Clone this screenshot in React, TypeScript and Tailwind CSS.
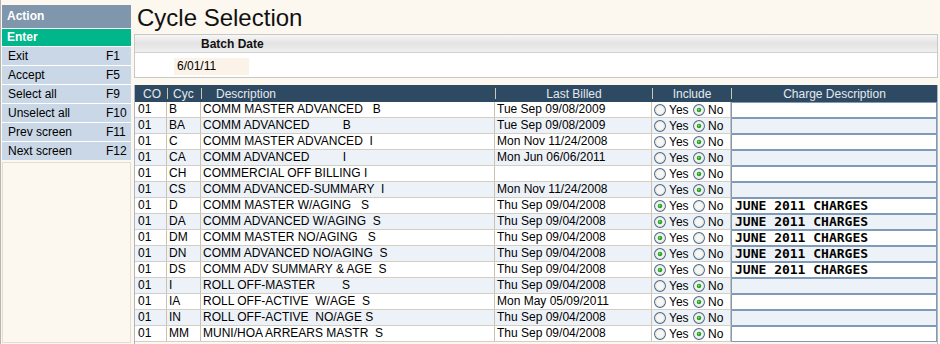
import React from "react";

type Row = {
  co: string;
  cyc: string;
  desc: string;
  billed: string;
  yes: boolean;
  charge: string;
};

const J = "JUNE 2011 CHARGES";

const rows: Row[] = [
  { co: "01", cyc: "B", desc: "COMM MASTER ADVANCED   B", billed: "Tue Sep 09/08/2009", yes: false, charge: "" },
  { co: "01", cyc: "BA", desc: "COMM ADVANCED          B", billed: "Tue Sep 09/08/2009", yes: false, charge: "" },
  { co: "01", cyc: "C", desc: "COMM MASTER ADVANCED  I", billed: "Mon Nov 11/24/2008", yes: false, charge: "" },
  { co: "01", cyc: "CA", desc: "COMM ADVANCED          I", billed: "Mon Jun 06/06/2011", yes: false, charge: "" },
  { co: "01", cyc: "CH", desc: "COMMERCIAL OFF BILLING I", billed: "", yes: false, charge: "" },
  { co: "01", cyc: "CS", desc: "COMM ADVANCED-SUMMARY  I", billed: "Mon Nov 11/24/2008", yes: false, charge: "" },
  { co: "01", cyc: "D", desc: "COMM MASTER W/AGING   S", billed: "Thu Sep 09/04/2008", yes: true, charge: J },
  { co: "01", cyc: "DA", desc: "COMM ADVANCED W/AGING  S", billed: "Thu Sep 09/04/2008", yes: true, charge: J },
  { co: "01", cyc: "DM", desc: "COMM MASTER NO/AGING   S", billed: "Thu Sep 09/04/2008", yes: true, charge: J },
  { co: "01", cyc: "DN", desc: "COMM ADVANCED NO/AGING  S", billed: "Thu Sep 09/04/2008", yes: true, charge: J },
  { co: "01", cyc: "DS", desc: "COMM ADV SUMMARY & AGE  S", billed: "Thu Sep 09/04/2008", yes: true, charge: J },
  { co: "01", cyc: "I", desc: "ROLL OFF-MASTER        S", billed: "Thu Sep 09/04/2008", yes: false, charge: "" },
  { co: "01", cyc: "IA", desc: "ROLL OFF-ACTIVE  W/AGE  S", billed: "Mon May 05/09/2011", yes: false, charge: "" },
  { co: "01", cyc: "IN", desc: "ROLL OFF-ACTIVE  NO/AGE S", billed: "Thu Sep 09/04/2008", yes: false, charge: "" },
  { co: "01", cyc: "MM", desc: "MUNI/HOA ARREARS MASTR  S", billed: "Thu Sep 09/04/2008", yes: false, charge: "" },
];

const menu: [string, string][] = [
  ["Exit", "F1"],
  ["Accept", "F5"],
  ["Select all", "F9"],
  ["Unselect all", "F10"],
  ["Prev screen", "F11"],
  ["Next screen", "F12"],
];

function Radio({ on }: { on: boolean }) {
  return (
    <svg width="12" height="12" viewBox="0 0 12 12" className="shrink-0">
      <circle cx="6" cy="6" r="5.4" fill="#f6f6f2" stroke="#4b6a8c" strokeWidth="1.1" />
      <circle cx="6" cy="6" r="4.3" fill="none" stroke="#e2e2dc" strokeWidth="0.8" />
      {on && (
        <>
          <circle cx="6" cy="6" r="2.3" fill="#2aa52a" />
          <circle cx="5.6" cy="5.6" r="0.9" fill="#7fdc7f" />
        </>
      )}
    </svg>
  );
}

function Sep() {
  return <span className="block w-px h-[11px] bg-[#c9c8b6] shrink-0" />;
}

export default function App() {
  return (
    <div className="w-[940px] h-[344px] overflow-hidden flex bg-[#fcf7ef] border-l border-[#b4b4b4] font-['Liberation_Sans',Arial,sans-serif] text-[12px] text-black">
      {/* Sidebar */}
      <aside className="w-[130px] shrink-0 flex flex-col pt-[5px] pl-[1px]">
        <div className="h-[23px] bg-[#7f96ad] text-white font-bold pl-[5px] leading-[23px]">Action</div>
        <div className="h-[1px] bg-white" />
        <div className="h-[17px] bg-[#00b68b] text-white font-bold pl-[5px] leading-[17px]">Enter</div>
        {menu.map(([label, key]) => (
          <div key={label} className="border-t border-white h-[19px] bg-[#c9d7e6] flex items-center pl-[6px]">
            <span className="w-[98px]">{label}</span>
            <span>{key}</span>
          </div>
        ))}
        <div className="flex-1 mt-[2px] mb-[1px] border border-[#e4ddd0]" />
      </aside>

      {/* Main */}
      <main className="flex-1 flex flex-col pl-[3px] pr-[2px]">
        <div className="h-[34px] shrink-0 pl-[3px] pt-[3px] leading-[30px] text-[24px] text-[#111]">Cycle Selection</div>

        <div className="shrink-0 border border-[#c8c8c8] bg-white">
          <div className="h-[18px] bg-gradient-to-b from-[#f7f7f7] via-[#e3e3e3] to-[#f0f0f0] border-b border-[#d0d0d0] pl-[66px] font-bold leading-[18px] text-[#111]">
            Batch Date
          </div>
          <div className="h-[24px] flex items-center pl-[39px]">
            <span className="block w-[75px] h-[17px] bg-[#fbf2e8] pl-[3px] leading-[17px] mt-[2px]">6/01/11</span>
          </div>
        </div>

        <div className="mt-[7px] border-x border-[#a9b7c6] flex-1 flex flex-col">
          {/* header */}
          <div className="h-[17px] shrink-0 bg-[#2e4962] text-[#e3e9ef] flex items-center">
            <div className="w-[32px] pl-[8px]">CO</div>
            <div className="w-[34px] flex items-center">
              <Sep />
              <span className="pl-[5px]">Cyc</span>
            </div>
            <div className="w-[294px] flex items-center">
              <Sep />
              <span className="pl-[14px]">Description</span>
            </div>
            <div className="w-[157px] flex items-center">
              <Sep />
              <span className="flex-1 text-center">Last Billed</span>
            </div>
            <div className="w-[79px] flex items-center">
              <Sep />
              <span className="flex-1 text-center">Include</span>
            </div>
            <div className="flex-1 flex items-center">
              <Sep />
              <span className="flex-1 text-center">Charge Description</span>
            </div>
          </div>

          {rows.map((r, i) => (
            <div
              key={r.cyc}
              className={`h-[16px] shrink-0 flex border-b border-[#d3cfc3] ${i % 2 === 1 ? "bg-[#edf2f8]" : "bg-white"}`}
            >
              <div className="w-[32px] pl-[3px] border-r border-[#c9c3b5] leading-[15px]">{r.co}</div>
              <div className="w-[34px] pl-[2px] border-r border-[#c9c3b5] leading-[15px]">{r.cyc}</div>
              <div className="w-[294px] pl-[2px] border-r border-[#c9c3b5] leading-[15px] whitespace-pre">{r.desc}</div>
              <div className="w-[157px] pl-[2px] border-r border-[#c9c3b5] leading-[15px]">{r.billed}</div>
              <div className="w-[79px] pl-[2px] border-r border-[#c9c3b5] flex items-center">
                <Radio on={r.yes} />
                <span className="pl-[3px] w-[27px]">Yes</span>
                <Radio on={!r.yes} />
                <span className="pl-[3px]">No</span>
              </div>
              <div className="flex-1 -mb-px border border-[#7f9bb9] pl-[3px] leading-[14px] font-['DejaVu_Sans_Mono',monospace] font-bold text-[13px]">
                {r.charge}
              </div>
            </div>
          ))}
        </div>
      </main>
    </div>
  );
}
